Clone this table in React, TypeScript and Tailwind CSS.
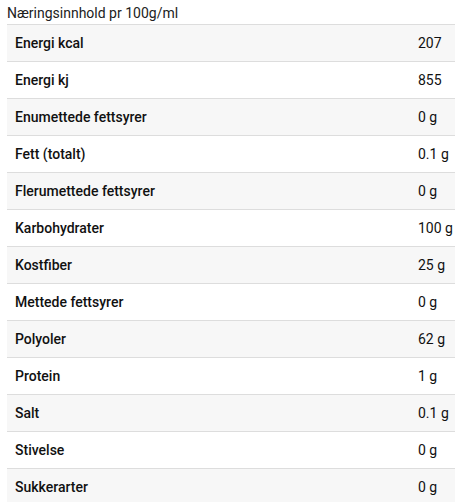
import React from "react";

const rows: [string, string][] = [
  ["Energi kcal", "207"],
  ["Energi kj", "855"],
  ["Enumettede fettsyrer", "0 g"],
  ["Fett (totalt)", "0.1 g"],
  ["Flerumettede fettsyrer", "0 g"],
  ["Karbohydrater", "100 g"],
  ["Kostfiber", "25 g"],
  ["Mettede fettsyrer", "0 g"],
  ["Polyoler", "62 g"],
  ["Protein", "1 g"],
  ["Salt", "0.1 g"],
  ["Stivelse", "0 g"],
  ["Sukkerarter", "0 g"],
];

export default function App() {
  return (
    <div className="bg-white pl-[7px] text-[14px] text-[#212121]" style={{ fontFamily: "Roboto, sans-serif" }}>
      <div className="h-[24px] leading-[24px] pt-[1px]">Næringsinnhold pr 100g/ml</div>
      <div className="border-t border-[#dddddd]">
        {rows.map(([k, v], i) => (
          <div
            key={k}
            className={`flex h-[37px] items-center border-b border-[#dddddd] ${i % 2 === 0 ? "bg-[#f7f7f7]" : "bg-white"}`}
          >
            <div className="flex-1 pl-[8px] font-medium text-[#111]">{k}</div>
            <div className="w-[37px] shrink-0 text-[#111]">{v}</div>
          </div>
        ))}
      </div>
    </div>
  );
}
